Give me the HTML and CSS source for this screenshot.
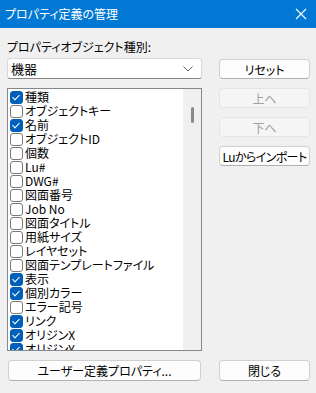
FILE: index.html
```html
<!DOCTYPE html>
<html lang="ja">
<head>
  <meta charset="UTF-8">
  <title>プロパティ定義の管理</title>
  <link rel="stylesheet" href="styles.css">
</head>
<body>
  <div class="window">
    <div class="titlebar">
      <span class="title">プロパティ定義の管理</span>
      <svg class="close" width="12" height="12" viewBox="0 0 12 12">
        <path d="M1 1 L11 11 M11 1 L1 11" stroke="#ffffff" stroke-width="1.1" fill="none"/>
      </svg>
    </div>

    <div class="main">
      <div class="left">
        <div class="label">プロパティオブジェクト種別:</div>
        <div class="combo">
          <span>機器</span>
          <svg width="10" height="6" viewBox="0 0 10 6">
            <path d="M0.5 0.5 L5 5 L9.5 0.5" stroke="#606060" stroke-width="1" fill="none"/>
          </svg>
        </div>
        <div class="list">
          <div class="items">
            <div class="item"><span class="box on"></span>種類</div>
            <div class="item"><span class="box"></span>オブジェクトキー</div>
            <div class="item"><span class="box on"></span>名前</div>
            <div class="item"><span class="box"></span>オブジェクトID</div>
            <div class="item"><span class="box"></span>個数</div>
            <div class="item"><span class="box"></span>Lu#</div>
            <div class="item"><span class="box"></span>DWG#</div>
            <div class="item"><span class="box"></span>図面番号</div>
            <div class="item"><span class="box"></span>Job No</div>
            <div class="item"><span class="box"></span>図面タイトル</div>
            <div class="item"><span class="box"></span>用紙サイズ</div>
            <div class="item"><span class="box"></span>レイヤセット</div>
            <div class="item"><span class="box"></span>図面テンプレートファイル</div>
            <div class="item"><span class="box on"></span>表示</div>
            <div class="item"><span class="box on"></span>個別カラー</div>
            <div class="item"><span class="box"></span>エラー記号</div>
            <div class="item"><span class="box on"></span>リンク</div>
            <div class="item"><span class="box on"></span>オリジンX</div>
            <div class="item"><span class="box on"></span>オリジンY</div>
          </div>
          <div class="scrollbar"><div class="thumb"></div></div>
        </div>
      </div>

      <div class="right">
        <button class="btn">リセット</button>
        <button class="btn" disabled>上へ</button>
        <button class="btn" disabled>下へ</button>
        <button class="btn import">Luからインポート</button>
      </div>
    </div>

    <div class="bottom">
      <button class="btn wide">ユーザー定義プロパティ...</button>
      <button class="btn">閉じる</button>
    </div>
  </div>
</body>
</html>
```

FILE: styles.css
```css
body {
  margin: 0;
  background: #f0f0f0;
  font-family: "Noto Sans CJK JP", "Noto Sans", sans-serif;
  font-size: 12px;
  color: #000000;
  font-feature-settings: "palt";
}

.window {
  width: 316px;
  height: 393px;
  overflow: hidden;
}

.titlebar {
  height: 28px;
  background: #0078d4;
  color: #ffffff;
  display: flex;
  align-items: center;
  justify-content: space-between;
  padding: 0 9px 0 5px;
}

.title {
  font-size: 12px;
  line-height: 16px;
}

.close {
  display: block;
}

.main {
  display: flex;
  gap: 17px;
  padding: 0 6px 0 7px;
}

.left {
  width: 195px;
  display: flex;
  flex-direction: column;
}

.label {
  margin-top: 11px;
  line-height: 16px;
  height: 16px;
  margin-bottom: 3px;
}

.combo {
  height: 19px;
  background: #ffffff;
  border: 1px solid #d9d9d9;
  border-bottom-color: #868686;
  border-radius: 3px;
  display: flex;
  align-items: center;
  justify-content: space-between;
  padding: 0 8px 0 3px;
  font-size: 13px;
}

.list {
  margin-top: 9px;
  height: 261px;
  border: 1px solid #828790;
  background: #ffffff;
  display: flex;
  overflow: hidden;
}

.items {
  flex: 1;
  padding-top: 1px;
}

.item {
  height: 14px;
  line-height: 14px;
  display: flex;
  align-items: center;
  white-space: nowrap;
  padding-left: 2px;
}

.box {
  width: 11px;
  height: 11px;
  border: 1px solid #7a7a7a;
  border-radius: 3px;
  background: #ffffff;
  margin-right: 2px;
  flex-shrink: 0;
  position: relative;
}

.box.on {
  background: #005fb8;
  border-color: #005fb8;
}

.box.on::after {
  content: "";
  position: absolute;
  left: 3px;
  top: 1px;
  width: 3px;
  height: 6px;
  border: solid #ffffff;
  border-width: 0 1px 1px 0;
  transform: rotate(45deg);
}

.scrollbar {
  width: 18px;
  background: #f0f0f0;
  flex-shrink: 0;
}

.thumb {
  width: 3px;
  height: 16px;
  background: #8a8a8a;
  border-radius: 2px;
  margin: 18px 0 0 8px;
}

.right {
  width: 91px;
  display: flex;
  flex-direction: column;
  gap: 9px;
  padding-top: 31px;
}

.btn {
  height: 20px;
  padding: 0;
  background: #fdfdfd;
  border: 1px solid #d0d0d0;
  border-bottom-color: #b0b0b0;
  border-radius: 4px;
  font-family: inherit;
  font-size: 12px;
  color: #000000;
  font-feature-settings: "palt";
  white-space: nowrap;
}

.btn.import {
  letter-spacing: -0.6px;
}

.btn:disabled {
  background: #f5f5f5;
  border-color: #e5e5e5;
  color: #a0a0a0;
}

.bottom {
  display: flex;
  justify-content: space-between;
  padding: 9px 6px 0 8px;
}

.bottom .btn {
  width: 91px;
  height: 21px;
}

.bottom .btn.wide {
  width: 193px;
}
```
